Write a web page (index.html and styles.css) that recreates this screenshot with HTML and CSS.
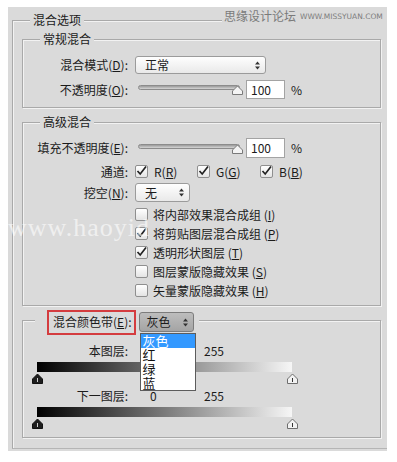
FILE: index.html
```html
<!DOCTYPE html>
<html lang="zh-CN">
<head>
<meta charset="utf-8">
<title>混合选项</title>
<link rel="stylesheet" href="styles.css">
</head>
<body>
<div class="panel">
  <div class="site-mark"><span class="site-cn">思缘设计论坛</span><span class="site-en">WWW.MISSYUAN.COM</span></div>
  <div class="outer">
    <div class="legend">混合选项</div>

    <div class="group g1">
      <div class="legend">常规混合</div>
      <div class="row r-mode">
        <div class="lbl">混合模式(<u>D</u>):</div>
        <div class="select sel-mode"><span>正常</span>
          <svg class="arr" width="7" height="11" viewBox="0 0 7 11"><path d="M3.5 1.5 L6 4.5 H1 Z M3.5 9.5 L6 6.5 H1 Z" fill="#333"/></svg>
        </div>
      </div>
      <div class="row r-op">
        <div class="lbl">不透明度(<u>O</u>):</div>
        <div class="slider"><div class="track"></div>
          <svg class="knob" width="11" height="13" viewBox="0 0 11 13"><path d="M5.5 4 L10.5 9 V12.5 H0.5 V9 Z" fill="#f4f4f4" stroke="#7a7a7a" stroke-linejoin="round"/></svg>
        </div>
        <div class="num">100</div>
        <div class="pct">%</div>
      </div>
    </div>

    <div class="group g2">
      <div class="legend">高级混合</div>
      <div class="row r-fill">
        <div class="lbl">填充不透明度(<u>E</u>):</div>
        <div class="slider"><div class="track"></div>
          <svg class="knob" width="11" height="13" viewBox="0 0 11 13"><path d="M5.5 4 L10.5 9 V12.5 H0.5 V9 Z" fill="#f4f4f4" stroke="#7a7a7a" stroke-linejoin="round"/></svg>
        </div>
        <div class="num">100</div>
        <div class="pct">%</div>
      </div>
      <div class="row r-chan">
        <div class="lbl">通道:</div>
        <div class="chan c-r"><span class="cb"><svg width="13" height="13" viewBox="0 0 13 13"><path d="M2.5 6 L5.2 9 L11 1.5" fill="none" stroke="#222" stroke-width="1.7"/></svg></span><span>R(<u>R</u>)</span></div>
        <div class="chan c-g"><span class="cb"><svg width="13" height="13" viewBox="0 0 13 13"><path d="M2.5 6 L5.2 9 L11 1.5" fill="none" stroke="#222" stroke-width="1.7"/></svg></span><span>G(<u>G</u>)</span></div>
        <div class="chan c-b"><span class="cb"><svg width="13" height="13" viewBox="0 0 13 13"><path d="M2.5 6 L5.2 9 L11 1.5" fill="none" stroke="#222" stroke-width="1.7"/></svg></span><span>B(<u>B</u>)</span></div>
      </div>
      <div class="row r-knock">
        <div class="lbl">挖空(<u>N</u>):</div>
        <div class="select sel-knock"><span>无</span>
          <svg class="arr" width="7" height="11" viewBox="0 0 7 11"><path d="M3.5 1.5 L6 4.5 H1 Z M3.5 9.5 L6 6.5 H1 Z" fill="#333"/></svg>
        </div>
      </div>
      <div class="checks">
        <div class="ck"><span class="cb"></span><span>将内部效果混合成组 (<u>I</u>)</span></div>
        <div class="ck"><span class="cb"><svg width="13" height="13" viewBox="0 0 13 13"><path d="M2.5 6 L5.2 9 L11 1.5" fill="none" stroke="#222" stroke-width="1.7"/></svg></span><span>将剪贴图层混合成组 (<u>P</u>)</span></div>
        <div class="ck"><span class="cb"><svg width="13" height="13" viewBox="0 0 13 13"><path d="M2.5 6 L5.2 9 L11 1.5" fill="none" stroke="#222" stroke-width="1.7"/></svg></span><span>透明形状图层 (<u>T</u>)</span></div>
        <div class="ck"><span class="cb"></span><span>图层蒙版隐藏效果 (<u>S</u>)</span></div>
        <div class="ck"><span class="cb"></span><span>矢量蒙版隐藏效果 (<u>H</u>)</span></div>
      </div>
    </div>

    <div class="group g3">
      <div class="band-head">
        <div class="band-lbl">混合颜色带(<u>E</u>):</div>
        <div class="select sel-band"><span>灰色</span>
          <svg class="arr" width="7" height="11" viewBox="0 0 7 11"><path d="M3.5 1.5 L6 4.5 H1 Z M3.5 9.5 L6 6.5 H1 Z" fill="#333"/></svg>
          <ul class="menu">
            <li class="on">灰色</li>
            <li>红</li>
            <li>绿</li>
            <li>蓝</li>
          </ul>
        </div>
      </div>
      <div class="row vals v1">
        <div class="lbl">本图层:</div>
        <div class="v0"></div>
        <div class="v255">255</div>
      </div>
      <div class="bar"></div>
      <div class="thumbs">
        <svg width="11" height="11" viewBox="0 0 11 11"><path d="M5.5 1 L10.5 6 V10.5 H0.5 V6 Z" fill="#1e1e1e" stroke="#111" stroke-linejoin="round"/><path d="M5.5 5 V9" stroke="#cfcfcf"/></svg>
        <svg width="11" height="11" viewBox="0 0 11 11"><path d="M5.5 1 L10.5 6 V10.5 H0.5 V6 Z" fill="#f2f2f2" stroke="#6e6e6e" stroke-linejoin="round"/><path d="M5.5 5 V9" stroke="#333"/></svg>
      </div>
      <div class="row vals v2">
        <div class="lbl">下一图层:</div>
        <div class="v0">0</div>
        <div class="v255">255</div>
      </div>
      <div class="bar"></div>
      <div class="thumbs">
        <svg width="11" height="11" viewBox="0 0 11 11"><path d="M5.5 1 L10.5 6 V10.5 H0.5 V6 Z" fill="#1e1e1e" stroke="#111" stroke-linejoin="round"/><path d="M5.5 5 V9" stroke="#cfcfcf"/></svg>
        <svg width="11" height="11" viewBox="0 0 11 11"><path d="M5.5 1 L10.5 6 V10.5 H0.5 V6 Z" fill="#f2f2f2" stroke="#6e6e6e" stroke-linejoin="round"/><path d="M5.5 5 V9" stroke="#333"/></svg>
      </div>
    </div>
  </div>
  <div class="wm">www.haoyid</div>
</div>
</body>
</html>
```

FILE: styles.css
```css
html, body {
  margin: 0;
  padding: 0;
  background: #ffffff;
}
body {
  font-family: "Noto Sans CJK SC", "Noto Sans", sans-serif;
  font-size: 12px;
  color: #1b1b1b;
}
u {
  text-decoration: underline;
  text-underline-offset: 1px;
}
.panel {
  position: relative;
  margin: 7px 0 0 8px;
  width: 379px;
  height: 444px;
  background: #dadada;
  overflow: hidden;
}
.site-mark {
  position: absolute;
  left: 214px;
  top: 0;
  right: 0;
  height: 17px;
  padding-left: 2px;
  background: #dadada;
  display: flex;
  align-items: center;
  gap: 4px;
  white-space: nowrap;
  z-index: 2;
}
.site-cn {
  flex: none;
  font-size: 12px;
  line-height: 16px;
  color: #7a7a7a;
}
.site-en {
  flex: none;
  font-family: "DejaVu Sans", sans-serif;
  font-size: 7.5px;
  color: #7d7d7d;
  margin-top: 1px;
}
.wm {
  position: absolute;
  left: 0;
  top: 206px;
  font-family: "Liberation Serif", serif;
  font-size: 26px;
  line-height: 30px;
  letter-spacing: 1px;
  white-space: nowrap;
  color: rgba(255, 255, 255, 0.6);
  pointer-events: none;
  z-index: 3;
}
.outer {
  margin: 13px 0 0 4px;
  height: 427px;
  border-left: 1px solid #a9a9a9;
  border-top: 1px solid #a9a9a9;
  border-bottom: 1px solid #b5b5b5;
  box-shadow: inset 1px 1px 0 #f2f2f2;
}
.legend {
  width: fit-content;
  height: 16px;
  line-height: 16px;
  padding: 0 3px;
  margin: -9px 0 0 17px;
  background: #dadada;
}
.group {
  margin: 0 6px 0 9px;
  border: 1px solid #a9a9a9;
  box-shadow: inset 1px 1px 0 #f2f2f2, 1px 1px 0 #f2f2f2;
}
.g1 {
  margin-top: 11px;
  padding-bottom: 8px;
}
.g2 {
  margin-top: 14px;
  padding-bottom: 5px;
}
.g3 {
  margin-top: 14px;
  padding-bottom: 8px;
}
.row {
  display: flex;
  align-items: center;
}
.lbl {
  flex: none;
  width: 105px;
  margin-right: 7px;
  text-align: right;
  line-height: 16px;
  white-space: nowrap;
}
.r-mode { margin-top: 9px; height: 18px; }
.r-op { margin-top: 6px; height: 19px; }
.r-fill { margin-top: 8px; height: 20px; }
.r-chan { margin-top: 7px; height: 13px; }
.r-knock { margin-top: 5px; height: 19px; }

.select {
  position: relative;
  box-sizing: border-box;
  display: flex;
  align-items: center;
  justify-content: space-between;
  border: 1px solid #9b9b9b;
  border-radius: 3px;
  background: linear-gradient(#fefefe, #e9e9e9);
  line-height: 16px;
}
.sel-mode {
  width: 131px;
  height: 18px;
  padding: 0 4px 0 9px;
}
.sel-knock {
  width: 55px;
  height: 19px;
  padding: 0 4px 0 9px;
}
.sel-band {
  width: 55px;
  height: 20px;
  padding: 0 4px 0 7px;
  border-color: #7c7c7c;
  background: linear-gradient(#bdbdbd, #a4a4a4);
}
.arr { flex: none; }

.slider {
  position: relative;
  width: 111px;
  height: 19px;
  flex: none;
}
.track {
  position: absolute;
  left: 3px;
  top: 5px;
  width: 102px;
  height: 5px;
  box-sizing: border-box;
  border: 1px solid #8c8c8c;
  border-radius: 3px;
  background: linear-gradient(#9a9a9a, #d6d6d6);
}
.knob {
  position: absolute;
  left: 97px;
  top: 2px;
}
.num {
  box-sizing: border-box;
  width: 39px;
  height: 19px;
  border: 1px solid #a3a3a3;
  background: #ffffff;
  padding-left: 4px;
  line-height: 17px;
}
.r-fill .num { height: 20px; line-height: 18px; }
.pct {
  margin-left: 6px;
  line-height: 16px;
}

.cb {
  flex: none;
  box-sizing: border-box;
  width: 13px;
  height: 13px;
  border: 1px solid #8f8f8f;
  border-radius: 2px;
  background: linear-gradient(#ffffff, #e4e4e4);
  overflow: visible;
  display: block;
}
.cb svg {
  display: block;
  margin: -1px 0 0 -1px;
  overflow: visible;
}
.chan {
  display: flex;
  align-items: center;
  gap: 6px;
  line-height: 16px;
  flex: none;
}
.c-r { width: 62px; }
.c-g { width: 63px; }
.checks {
  margin: 3px 0 0 112px;
}
.ck {
  display: flex;
  align-items: center;
  gap: 5px;
  height: 19px;
  line-height: 16px;
  white-space: nowrap;
}

.band-head {
  display: flex;
  align-items: center;
  gap: 3px;
  width: fit-content;
  height: 20px;
  margin: -9px 0 0 12px;
  padding: 0 5px 0 12px;
  background: #dadada;
  position: relative;
  z-index: 4;
}
.band-lbl {
  flex: none;
  box-sizing: border-box;
  height: 25px;
  border: 2px solid #d43c3f;
  padding: 2px 2px 3px 4px;
  line-height: 16px;
  white-space: nowrap;
}
.menu {
  position: absolute;
  left: 0;
  top: 20px;
  width: 56px;
  margin: 0;
  padding: 0;
  list-style: none;
  box-sizing: border-box;
  border: 1px solid #5c5c5c;
  background: #ffffff;
  font-size: 13px;
  color: #111;
}
.menu li {
  height: 14px;
  line-height: 14px;
  padding-left: 2px;
}
.menu li.on {
  height: 14px;
  line-height: 14px;
  background: #3399ff;
  color: #ffffff;
}
.vals { height: 16px; line-height: 12px; }
.vals .lbl { line-height: 12px; }
.v1 { margin-top: 11px; }
.v2 { margin-top: 4px; }
.v0 {
  flex: none;
  box-sizing: border-box;
  margin-left: 12px;
  width: 57px;
  padding-left: 3px;
}
.v255 { flex: none; }
.bar {
  margin: 3px 0 0 14px;
  width: 255px;
  height: 10px;
  background: linear-gradient(90deg, #000000, #7a7a7a 50%, #f6f6f6);
}
.thumbs {
  display: flex;
  justify-content: space-between;
  width: 266px;
  height: 11px;
  margin: 1px 0 0 9px;
}
.thumbs svg { display: block; }
```
